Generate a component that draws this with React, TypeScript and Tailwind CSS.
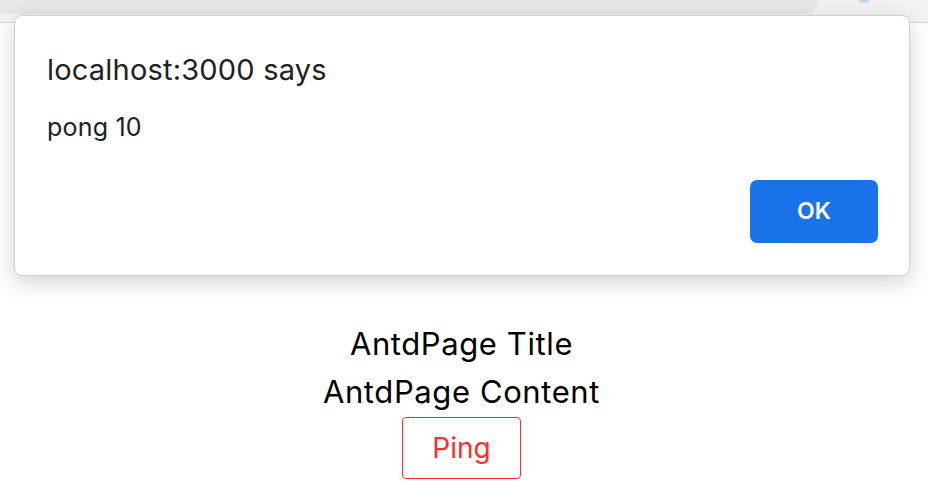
import React from "react";

export default function App() {
  return (
    <div
      className="relative w-full h-[502px] bg-white overflow-hidden"
      style={{ fontFamily: "Inter, 'Noto Sans', sans-serif" }}
    >
      {/* browser chrome strip */}
      <div className="relative h-[23px] bg-[#f3f3f3] border-b border-[#d6d6d6]">
        <div className="h-[14px] w-[818px] bg-[#e8e8e8] rounded-br-[14px]" />
        <div className="absolute left-[858px] top-[-6px] w-[12px] h-[9px] rounded-full bg-[#c6d8ef]" />
      </div>

      {/* page content */}
      <div className="flex flex-col items-center pt-[297px] pr-[5px] text-black">
        <div className="text-[31px] leading-[48px] tracking-[0.6px]">AntdPage Title</div>
        <div className="text-[31px] leading-[48px] tracking-[0.6px]">AntdPage Content</div>
        <button className="mt-px w-[119px] h-[62px] border border-[#ff2e2e] rounded-[4px] text-[#ff2e2e] text-[28px] bg-white">
          Ping
        </button>
      </div>

      {/* alert dialog overlay */}
      <div className="absolute left-[14px] top-[15px] w-[896px] h-[261px] bg-white rounded-[8px] border border-[#cfcfcf] shadow-[0_6px_24px_rgba(0,0,0,0.18)] flex flex-col px-[32px]">
        <div className="pt-[37px] text-[29px] leading-[34px] tracking-[0.2px] text-[#202124]">localhost:3000 says</div>
        <div className="mt-[26px] text-[25px] leading-[28px] tracking-[0.2px] text-[#202124]">pong 10</div>
        <div className="flex justify-end mt-auto mb-[32px] -mr-[1px]">
          <button className="w-[128px] h-[63px] bg-[#1a73e8] rounded-[7px] text-white text-[23px] font-semibold">
            OK
          </button>
        </div>
      </div>
    </div>
  );
}
